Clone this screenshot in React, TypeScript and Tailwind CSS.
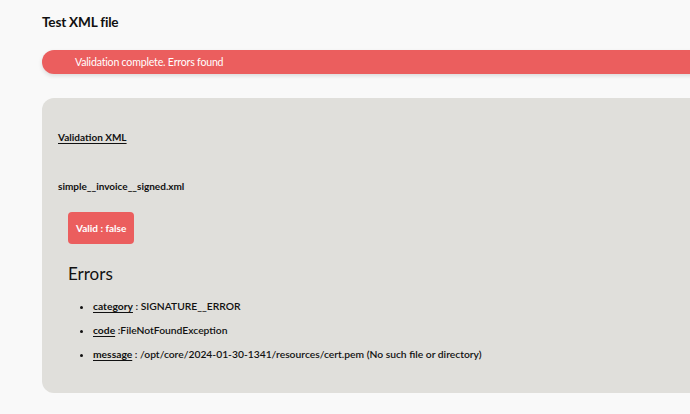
export default function App() {
  const errors = [
    { label: "category", sep: " : ", value: "SIGNATURE__ERROR" },
    { label: "code", sep: " :", value: "FileNotFoundException" },
    {
      label: "message",
      sep: " : ",
      value: "/opt/core/2024-01-30-1341/resources/cert.pem (No such file or directory)",
    },
  ];

  return (
    <div
      className="min-h-screen w-[720px] bg-[#f9f9f9] pl-[42px] text-[#111] overflow-hidden"
      style={{ fontFamily: 'Lato, "Noto Sans CJK KR", sans-serif' }}
    >
      <h1 className="pt-[12px] text-[13.6px] font-bold leading-[20px] tracking-[-0.2px]">Test XML file</h1>

      <div className="mt-[18px] h-[24px] rounded-l-full bg-[#eb5e5e] pl-[33px] text-[10.6px] leading-[24px] text-white tracking-[-0.2px] shadow-[0_2px_4px_rgba(0,0,0,0.12)]">
        Validation complete. Errors found
      </div>

      <div className="mt-[24px] h-[295px] rounded-l-[12px] bg-[#e0dfdb] pl-[16px] pt-[31px]">
        <div className="text-[10px] font-bold leading-[16px] underline underline-offset-[2px]">
          Validation XML
        </div>

        <div className="mt-[33px] text-[10px] font-bold leading-[16px]">simple__invoice__signed.xml</div>

        <div className="ml-[10px] mt-[18px] inline-flex h-[32px] items-center rounded-[4px] bg-[#eb5e5e] px-[8px] text-[10px] font-bold text-white">
          Valid : false
        </div>

        <h2 className="ml-[10px] mt-[18px] text-[17px] leading-[24px]">Errors</h2>

        <ul className="ml-[35px] mt-[12px] list-disc text-[10.3px] leading-[16px]">
          {errors.map((e) => (
            <li key={e.label} className="mb-[8px]">
              <span className="font-bold underline underline-offset-[2px]">{e.label}</span>
              <span className="font-semibold">
                {e.sep}
                {e.value}
              </span>
            </li>
          ))}
        </ul>
      </div>
    </div>
  );
}
